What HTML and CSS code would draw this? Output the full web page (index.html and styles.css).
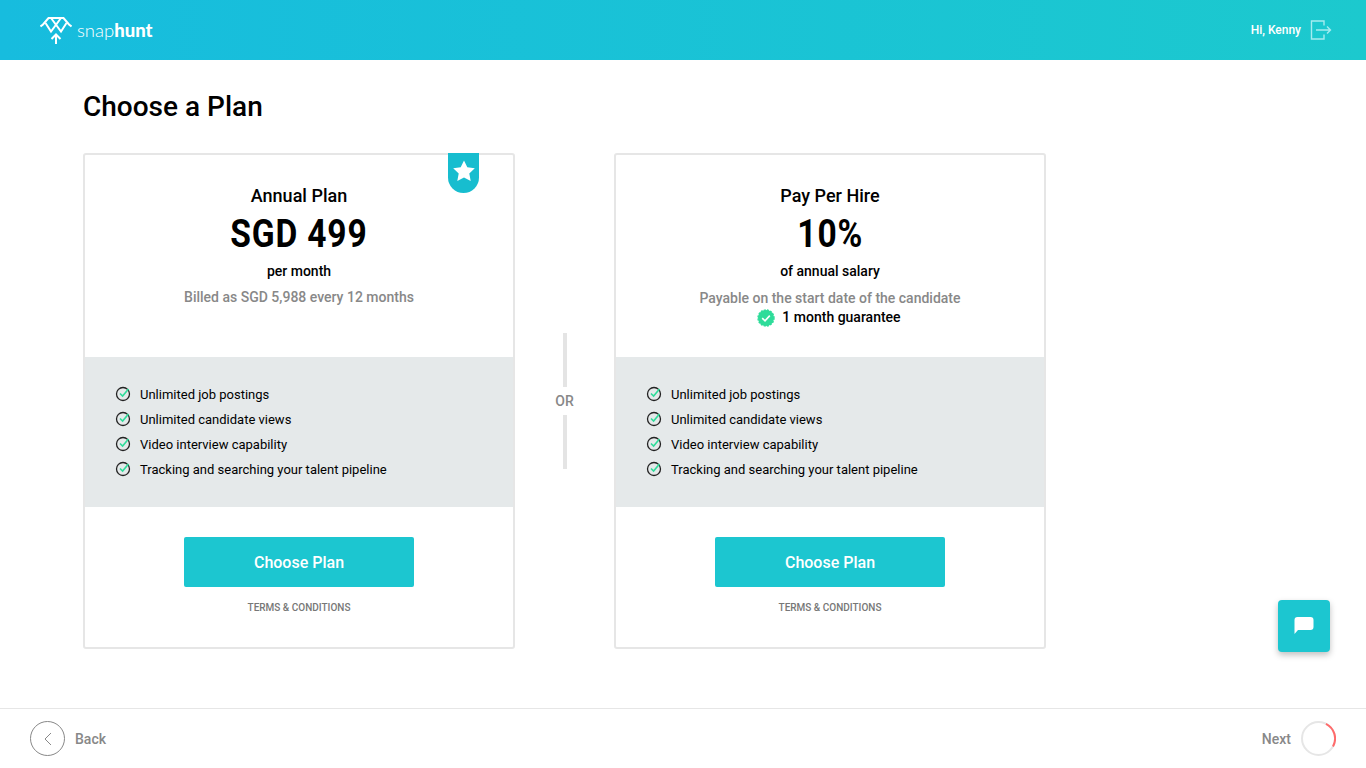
FILE: index.html
```html
<!DOCTYPE html>
<html>
<head>
    <title>Choose a Plan</title>
    <link rel="stylesheet" href="styles.css">
</head>
<body>

    <header class="topbar">
        <div class="brand">
            <svg class="brand-mark" viewBox="0 0 32 28" width="32" height="28" fill="none" stroke="#fff" stroke-width="2">
                <path d="M0.5 10.5 L3 8.5 L8.5 2 H23.5 L29 8.5 L31.5 10.5"/>
                <path d="M5.5 7 L11 15.5 L21 2"/>
                <path d="M26.5 7 L21 15.5 L11 2"/>
                <path d="M16 28 V18.5 M11.5 23 L16 18.5 L20.5 23"/>
            </svg>
            <span class="brand-name">snap<b>hunt</b></span>
        </div>
        <div class="user">
            <span>Hi, Kenny</span>
            <svg viewBox="0 0 22 20" width="22" height="20" fill="none" stroke="#a5ecf0" stroke-width="1.4">
                <path d="M14 5.5 V1 H1.5 V19 H14 V14.5"/>
                <path d="M6 10 H20 M17 6.5 L20.5 10 L17 13.5"/>
            </svg>
        </div>
    </header>

    <main class="content">
        <h1>Choose a Plan</h1>
        <div class="plans">
            <section class="plan">
                <div class="ribbon">
                    <svg viewBox="0 0 24 24" width="24" height="24" fill="#fff">
                        <path d="M12 1.5 L15.3 8.3 L22.8 9.3 L17.3 14.5 L18.7 22 L12 18.4 L5.3 22 L6.7 14.5 L1.2 9.3 L8.7 8.3 Z"/>
                    </svg>
                </div>
                <div class="plan-head">
                    <h2>Annual Plan</h2>
                    <div class="price"><span>SGD 499</span></div>
                    <div class="per">per month</div>
                    <div class="note">Billed as SGD 5,988 every 12 months</div>
                </div>
                <ul class="features">
                    <li><svg class="tick" viewBox="0 0 16 16" width="16" height="16"><circle cx="8" cy="8" r="6.5" fill="none" stroke="#222" stroke-width="1.3"/><path d="M5 7.5 L7.6 10 L13.5 3" fill="none" stroke="#2fdc9a" stroke-width="1.6"/></svg>Unlimited job postings</li>
                    <li><svg class="tick" viewBox="0 0 16 16" width="16" height="16"><circle cx="8" cy="8" r="6.5" fill="none" stroke="#222" stroke-width="1.3"/><path d="M5 7.5 L7.6 10 L13.5 3" fill="none" stroke="#2fdc9a" stroke-width="1.6"/></svg>Unlimited candidate views</li>
                    <li><svg class="tick" viewBox="0 0 16 16" width="16" height="16"><circle cx="8" cy="8" r="6.5" fill="none" stroke="#222" stroke-width="1.3"/><path d="M5 7.5 L7.6 10 L13.5 3" fill="none" stroke="#2fdc9a" stroke-width="1.6"/></svg>Video interview capability</li>
                    <li><svg class="tick" viewBox="0 0 16 16" width="16" height="16"><circle cx="8" cy="8" r="6.5" fill="none" stroke="#222" stroke-width="1.3"/><path d="M5 7.5 L7.6 10 L13.5 3" fill="none" stroke="#2fdc9a" stroke-width="1.6"/></svg>Tracking and searching your talent pipeline</li>
                </ul>
                <div class="plan-foot">
                    <button class="choose">Choose Plan</button>
                    <a class="terms">TERMS &amp; CONDITIONS</a>
                </div>
            </section>

            <div class="or">
                <span class="or-line"></span>
                <span class="or-text">OR</span>
                <span class="or-line"></span>
            </div>

            <section class="plan">
                <div class="plan-head">
                    <h2>Pay Per Hire</h2>
                    <div class="price"><span>10%</span></div>
                    <div class="per">of annual salary</div>
                    <div class="note note-tight">Payable on the start date of the candidate</div>
                    <div class="guarantee">
                        <svg viewBox="0 0 18 18" width="18" height="18">
                            <circle cx="9" cy="9" r="8" fill="#2fdc9a" stroke="#2fdc9a" stroke-width="1.4" stroke-dasharray="2 1.2"/>
                            <path d="M5.2 9.2 L8 11.8 L12.8 6.6" fill="none" stroke="#fff" stroke-width="1.6"/>
                        </svg>
                        1 month guarantee
                    </div>
                </div>
                <ul class="features">
                    <li><svg class="tick" viewBox="0 0 16 16" width="16" height="16"><circle cx="8" cy="8" r="6.5" fill="none" stroke="#222" stroke-width="1.3"/><path d="M5 7.5 L7.6 10 L13.5 3" fill="none" stroke="#2fdc9a" stroke-width="1.6"/></svg>Unlimited job postings</li>
                    <li><svg class="tick" viewBox="0 0 16 16" width="16" height="16"><circle cx="8" cy="8" r="6.5" fill="none" stroke="#222" stroke-width="1.3"/><path d="M5 7.5 L7.6 10 L13.5 3" fill="none" stroke="#2fdc9a" stroke-width="1.6"/></svg>Unlimited candidate views</li>
                    <li><svg class="tick" viewBox="0 0 16 16" width="16" height="16"><circle cx="8" cy="8" r="6.5" fill="none" stroke="#222" stroke-width="1.3"/><path d="M5 7.5 L7.6 10 L13.5 3" fill="none" stroke="#2fdc9a" stroke-width="1.6"/></svg>Video interview capability</li>
                    <li><svg class="tick" viewBox="0 0 16 16" width="16" height="16"><circle cx="8" cy="8" r="6.5" fill="none" stroke="#222" stroke-width="1.3"/><path d="M5 7.5 L7.6 10 L13.5 3" fill="none" stroke="#2fdc9a" stroke-width="1.6"/></svg>Tracking and searching your talent pipeline</li>
                </ul>
                <div class="plan-foot">
                    <button class="choose">Choose Plan</button>
                    <a class="terms">TERMS &amp; CONDITIONS</a>
                </div>
            </section>
        </div>
    </main>

    <button class="chat">
        <svg viewBox="0 0 20 18" width="20" height="18" fill="#fff">
            <path d="M3.5 0 H16.5 A3 3 0 0 1 19.5 3 V10 A3 3 0 0 1 16.5 13 H4 L0.5 17 V3 A3 3 0 0 1 3.5 0 Z"/>
        </svg>
    </button>

    <footer class="bottombar">
        <div class="nav">
            <span class="circle">
                <svg viewBox="0 0 8 14" width="8" height="14" fill="none" stroke="#888" stroke-width="1">
                    <path d="M7 1 L1 7 L7 13"/>
                </svg>
            </span>
            <span>Back</span>
        </div>
        <div class="nav">
            <span>Next</span>
            <svg class="progress" viewBox="0 0 35 35" width="35" height="35" fill="none" stroke-width="2">
                <circle cx="17.5" cy="17.5" r="16.5" stroke="#e6e6e6"/>
                <path d="M25 2.8 A16.5 16.5 0 0 1 32 25.5" stroke="#ff6b6b"/>
            </svg>
        </div>
    </footer>

</body>
</html>
```

FILE: styles.css
```css
* {
    box-sizing: border-box;
}

body {
    font-family: Roboto, Arial, sans-serif;
    background-color: #ffffff;
    color: #000000;
    margin: 0;
    height: 768px;
    overflow: hidden;
    display: flex;
    flex-direction: column;
}

.topbar {
    height: 60px;
    flex: none;
    background: linear-gradient(90deg, #17bcde, #1cc9ce);
    display: flex;
    justify-content: space-between;
    align-items: center;
    padding: 0 34px 0 40px;
}

.brand {
    display: flex;
    align-items: center;
    gap: 5px;
    color: #ffffff;
}

.brand-name {
    font-family: Lato, sans-serif;
    font-size: 18.5px;
    font-weight: 300;
}

.brand-name b {
    font-weight: 900;
}

.user {
    display: flex;
    align-items: center;
    gap: 9px;
    color: #ffffff;
    font-size: 12px;
    font-weight: 500;
}

.content {
    flex: 1;
    padding: 30px 83px 0;
}

h1 {
    margin: 0 0 30px;
    font-size: 28px;
    line-height: 33px;
    font-weight: 500;
}

.plans {
    display: flex;
    align-items: center;
}

.plan {
    position: relative;
    width: 432px;
    height: 496px;
    border: 2px solid #e6e6e6;
    border-radius: 3px;
    display: flex;
    flex-direction: column;
}

.ribbon {
    position: absolute;
    top: -2px;
    right: 34px;
    width: 31px;
    height: 40px;
    background-color: #17bdcf;
    border-radius: 0 0 15.5px 15.5px;
    display: flex;
    justify-content: center;
    padding-top: 6px;
}

.plan-head {
    height: 202px;
    padding-top: 29px;
    text-align: center;
}

h2 {
    margin: 0 0 1px;
    font-size: 18px;
    line-height: 24px;
    font-weight: 500;
}

.price {
    font-size: 39px;
    line-height: 50px;
    font-weight: 700;
    letter-spacing: 1px;
}

.price span {
    display: inline-block;
    transform: scaleX(0.86);
}

.per {
    margin-top: 2px;
    font-size: 14px;
    line-height: 20px;
    font-weight: 500;
}

.note {
    margin-top: 6px;
    font-size: 14px;
    line-height: 20px;
    font-weight: 500;
    color: #888888;
}

.note-tight {
    margin-top: 8px;
    line-height: 19px;
}

.guarantee {
    display: flex;
    justify-content: center;
    align-items: center;
    gap: 7px;
    margin-left: -2px;
    font-size: 14px;
    line-height: 19px;
    font-weight: 500;
}

.features {
    list-style: none;
    margin: 0;
    height: 150px;
    padding: 25px 0 0 30px;
    background-color: #e5e9ea;
}

.features li {
    display: flex;
    align-items: center;
    gap: 9px;
    height: 25px;
    font-size: 13px;
}

.tick {
    margin-top: -2px;
}

.plan-foot {
    flex: 1;
    padding-top: 30px;
    display: flex;
    flex-direction: column;
    align-items: center;
}

.choose {
    width: 230px;
    height: 50px;
    border: none;
    border-radius: 2px;
    background-color: #1cc6d0;
    color: #ffffff;
    font-family: Roboto, Arial, sans-serif;
    font-size: 16px;
    font-weight: 500;
    cursor: pointer;
}

.terms {
    margin-top: 14px;
    font-size: 10px;
    line-height: 13px;
    font-weight: 500;
    color: #777777;
}

.or {
    width: 99px;
    display: flex;
    flex-direction: column;
    align-items: center;
}

.or-line {
    width: 4px;
    height: 54px;
    background-color: #e4e4e4;
}

.or-text {
    height: 28px;
    line-height: 28px;
    font-size: 14px;
    font-weight: 500;
    color: #888888;
}

.chat {
    position: absolute;
    left: 1278px;
    top: 600px;
    width: 52px;
    height: 52px;
    border: none;
    border-radius: 4px;
    background-color: #1cc6d0;
    box-shadow: 0 3px 6px rgba(0, 0, 0, 0.25);
    display: flex;
    justify-content: center;
    align-items: center;
    padding: 0;
}

.bottombar {
    height: 60px;
    flex: none;
    border-top: 1px solid #e6e6e6;
    display: flex;
    justify-content: space-between;
    align-items: center;
    padding: 0 30px;
}

.nav {
    display: flex;
    align-items: center;
    gap: 10px;
    font-size: 14px;
    font-weight: 500;
    color: #888888;
}

.circle {
    width: 35px;
    height: 35px;
    border: 1px solid #888888;
    border-radius: 50%;
    display: flex;
    justify-content: center;
    align-items: center;
}
```
